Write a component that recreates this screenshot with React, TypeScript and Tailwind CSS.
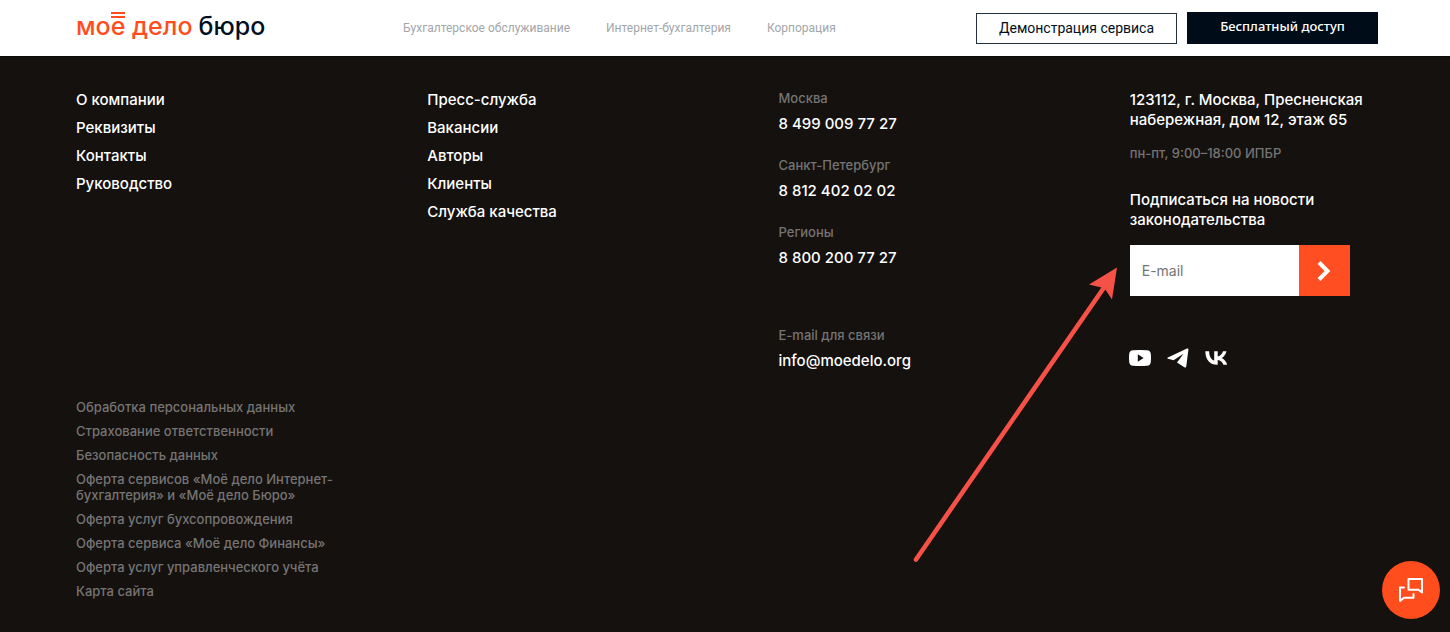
import React from 'react';

const navLinks = ['Бухгалтерское обслуживание', 'Интернет-бухгалтерия', 'Корпорация'];

const companyLinks = ['О компании', 'Реквизиты', 'Контакты', 'Руководство'];

const pressLinks = ['Пресс-служба', 'Вакансии', 'Авторы', 'Клиенты', 'Служба качества'];

const phones = [
  { city: 'Москва', phone: '8 499 009 77 27' },
  { city: 'Санкт-Петербург', phone: '8 812 402 02 02' },
  { city: 'Регионы', phone: '8 800 200 77 27' },
];

const legalLinks = [
  'Обработка персональных данных',
  'Страхование ответственности',
  'Безопасность данных',
  'Оферта сервисов «Моё дело Интернет-бухгалтерия» и «Моё дело Бюро»',
  'Оферта услуг бухсопровождения',
  'Оферта сервиса «Моё дело Финансы»',
  'Оферта услуг управленческого учёта',
  'Карта сайта',
];

function Logo() {
  return (
    <a href="#" className="flex shrink-0 gap-1.5 pb-1 text-[25px] leading-8 font-medium whitespace-nowrap text-[#ff4d1d]">
      <span>
        мо
        <span className="relative inline-block">
          е
          {/* double bar instead of the two dots */}
          <span className="absolute inset-x-0 top-0.5 h-1.5 border-y-2 border-[#ff4d1d]" />
        </span>{' '}
        дело
      </span>
      <span className="text-[#00101f]">бюро</span>
    </a>
  );
}

function Header() {
  return (
    <header className="flex h-14 items-center bg-white pr-[72px] pl-[76px]">
      <div className="w-[327px] shrink-0">
        <Logo />
      </div>
      <nav className="flex gap-9 font-['Roboto',sans-serif] text-[12px] whitespace-nowrap text-[#a3a6aa]">
        {navLinks.map((link) => (
          <a key={link} href="#">{link}</a>
        ))}
      </nav>
      <div className="ml-auto flex shrink-0 items-center gap-2.5">
        <button className="h-[31px] w-[201px] border border-[#24323f] font-['Roboto',sans-serif] text-[14px] text-[#00101f]">
          Демонстрация сервиса
        </button>
        <button className="h-8 w-[191px] bg-[#000c18] pb-0.5 font-['Noto_Sans',sans-serif] text-[13px] font-medium text-white">
          Бесплатный доступ
        </button>
      </div>
    </header>
  );
}

function LinkList({ links }: { links: string[] }) {
  return (
    <ul className="flex flex-col gap-2">
      {links.map((link) => (
        <li key={link}>
          <a href="#">{link}</a>
        </li>
      ))}
    </ul>
  );
}

function Contact({ label, value, href }: { label: string; value: string; href: string }) {
  return (
    <div className="flex flex-col gap-2">
      <p className="text-[13px] leading-4 text-[#767473]">{label}</p>
      <a href={href}>{value}</a>
    </div>
  );
}

function PointerArrow() {
  return (
    <svg
      className="pointer-events-none absolute top-5 right-full mr-3 text-[#f65146]"
      width="206"
      height="300"
      viewBox="0 0 206 300"
      fill="currentColor"
      aria-hidden="true"
    >
      <path d="M4 294.500L191 24" stroke="currentColor" strokeWidth="4.600" strokeLinecap="round" />
      <path d="M205 2.500L177 19.500L189.500 22.500L194 25.500L200 34.500Z" />
    </svg>
  );
}

function Subscribe() {
  return (
    <form className="relative mt-[15px] flex h-[51px] w-[220px]" onSubmit={(e) => e.preventDefault()}>
      <PointerArrow />
      <input
        type="email"
        aria-label="E-mail"
        placeholder="E-mail"
        className="min-w-0 flex-1 bg-white px-3 text-[14px] font-normal text-[#14110f] outline-none placeholder:text-[#757575]"
      />
      <button aria-label="Подписаться" className="flex w-[51px] items-center justify-center bg-[#ff4f22] text-white">
        <svg width="14" height="20" viewBox="0 0 14 20" fill="none" stroke="currentColor" strokeWidth="4" aria-hidden="true">
          <path d="M2 1.500L10.500 10L2 18.500" />
        </svg>
      </button>
    </form>
  );
}

function Socials() {
  return (
    <div className="mt-[50px] -ml-px flex items-center gap-4 text-white">
      <a href="#" aria-label="YouTube">
        <svg width="22" height="24" viewBox="0 0 22 24" fill="currentColor">
          <path
            fillRule="evenodd"
            d="M4 4.200Q11 3.700 18 4.200Q21.500 4.500 21.800 8Q22.200 12 21.800 16Q21.500 19.500 18 19.800Q11 20.300 4 19.800Q.5 19.500 .2 16Q-.2 12 .2 8Q.5 4.500 4 4.200ZM8.800 8.300V15.700L14.600 12Z"
          />
        </svg>
      </a>
      <a href="#" aria-label="Telegram">
        <svg width="22" height="24" viewBox="0 0 22 24" fill="currentColor">
          <path d="M20 2.600Q21.600 2 21.400 3.800L19.300 20.300Q19 22.200 17.300 21.200L10 16.400L16.500 7.800L6.600 14.300L1 12.700Q-.3 12.200 .9 11.500Z" />
        </svg>
      </a>
      <a href="#" aria-label="VK">
        <svg width="22" height="24" viewBox="0 0 22 24" fill="currentColor">
          <path d="M12.300 18.800C4.800 18.800.5 13.700.3 5.200H4.100C4.200 11.400 7 14.100 9.200 14.600V5.200H12.700V10.600C14.900 10.300 17.200 7.900 18 5.200H21.500C20.900 8.600 18.400 11.100 16.600 12.100C18.400 12.900 21.200 15 22.300 18.800H18.400C17.600 16.200 15.500 14.200 12.700 13.900V18.800Z" />
        </svg>
      </a>
    </div>
  );
}

function ChatButton() {
  return (
    <button
      aria-label="Чат"
      className="fixed right-2.5 bottom-[13px] flex h-[58px] w-[58px] items-center justify-center rounded-full bg-[#ff4d1d] text-white"
    >
      <svg width="26" height="26" viewBox="0 0 26 26" fill="none" stroke="currentColor" strokeWidth="2" strokeLinejoin="round" strokeLinecap="round">
        <path d="M10.500 2H24V15.500L20.500 12.700H10.500Z" />
        <path d="M6 10.500H2V24L6 20.800H15.500V17" />
      </svg>
    </button>
  );
}

export default function App() {
  return (
    <div className="min-h-screen bg-[#14110f] font-['Inter',sans-serif]">
      <Header />
      <footer className="border-t border-[#0a0c0b] px-[76px] pt-[33px] pb-8 font-medium">
        <div className="grid grid-cols-4 gap-[107px] text-[15px] leading-5 text-white">
          <LinkList links={companyLinks} />
          <LinkList links={pressLinks} />
          <div className="flex flex-col gap-[23px]">
            {phones.map((p) => (
              <Contact key={p.city} label={p.city} value={p.phone} href={`tel:${p.phone.replace(/ /g, '')}`} />
            ))}
            <div className="mt-9">
              <Contact label="E-mail для связи" value="info@moedelo.org" href="mailto:info@moedelo.org" />
            </div>
          </div>
          <div>
            <address className="whitespace-nowrap not-italic">
              123112, г. Москва, Пресненская
              <br />
              набережная, дом 12, этаж 65
            </address>
            <p className="mt-[15px] text-[13px] leading-4 text-[#767473]">пн-пт, 9:00–18:00 ИПБР</p>
            <p className="mt-[29px]">
              Подписаться на новости
              <br />
              законодательства
            </p>
            <Subscribe />
            <Socials />
          </div>
        </div>
        <ul className="mt-7 flex w-[270px] flex-col gap-2 text-[13px] leading-4 text-[#767473]">
          {legalLinks.map((link) => (
            <li key={link}>
              <a href="#">{link}</a>
            </li>
          ))}
        </ul>
      </footer>
      <ChatButton />
    </div>
  );
}
